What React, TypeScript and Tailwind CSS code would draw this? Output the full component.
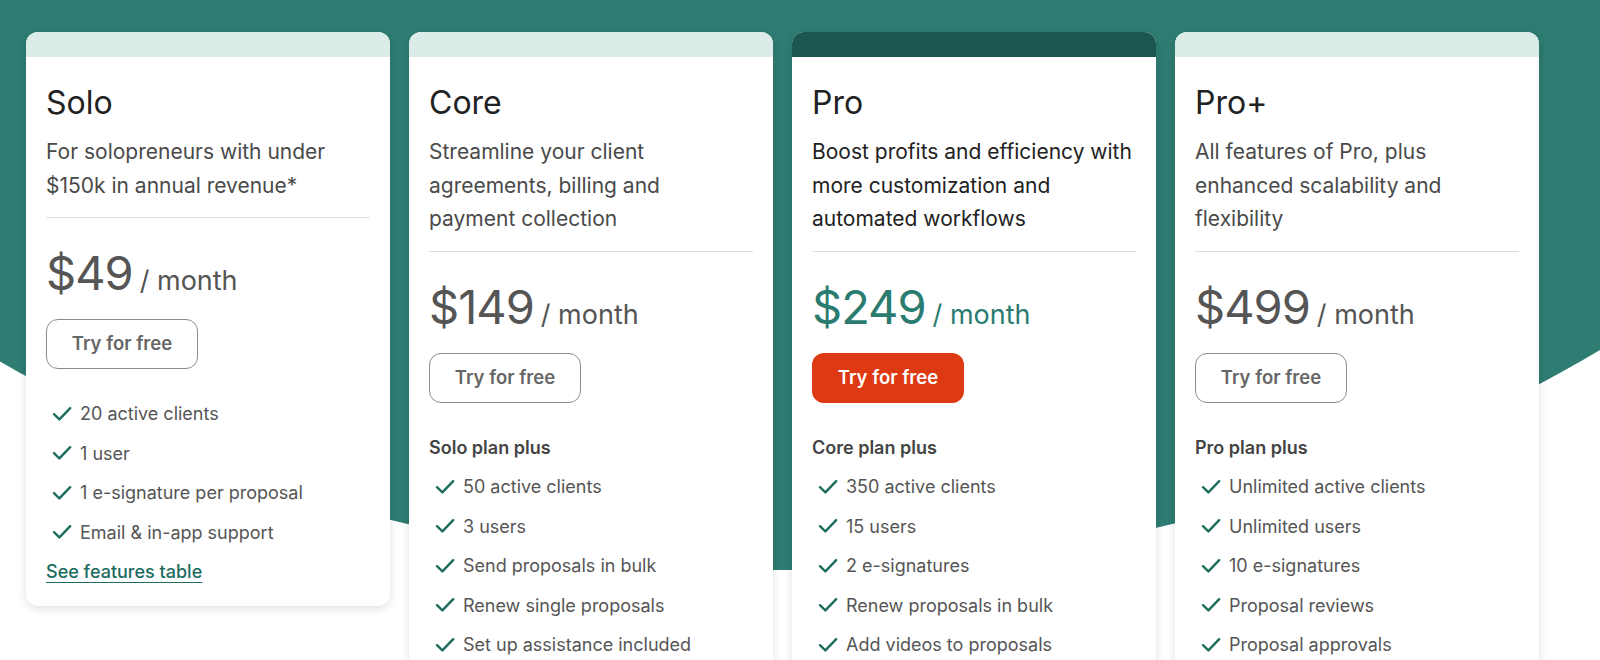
import React from "react";

type Plan = {
  name: string;
  desc: string[];
  price: string;
  featured?: boolean;
  heading?: string;
  features: string[];
  link?: string;
};

const plans: Plan[] = [
  {
    name: "Solo",
    desc: ["For solopreneurs with under", "$150k in annual revenue*"],
    price: "$49",
    features: ["20 active clients", "1 user", "1 e-signature per proposal", "Email & in-app support"],
    link: "See features table",
  },
  {
    name: "Core",
    desc: ["Streamline your client", "agreements, billing and", "payment collection"],
    price: "$149",
    heading: "Solo plan plus",
    features: [
      "50 active clients",
      "3 users",
      "Send proposals in bulk",
      "Renew single proposals",
      "Set up assistance included",
    ],
  },
  {
    name: "Pro",
    desc: ["Boost profits and efficiency with", "more customization and", "automated workflows"],
    price: "$249",
    featured: true,
    heading: "Core plan plus",
    features: [
      "350 active clients",
      "15 users",
      "2 e-signatures",
      "Renew proposals in bulk",
      "Add videos to proposals",
    ],
  },
  {
    name: "Pro+",
    desc: ["All features of Pro, plus", "enhanced scalability and", "flexibility"],
    price: "$499",
    heading: "Pro plan plus",
    features: [
      "Unlimited active clients",
      "Unlimited users",
      "10 e-signatures",
      "Proposal reviews",
      "Proposal approvals",
    ],
  },
];

function Check() {
  return (
    <svg width="20" height="16" viewBox="0 0 20 16" fill="none" className="shrink-0">
      <path d="M2 8.2 L7.4 13.4 L18.2 2.2" stroke="#1e6e60" strokeWidth="2.4" strokeLinecap="round" strokeLinejoin="round" />
    </svg>
  );
}

function PlanCard({ plan }: { plan: Plan }) {
  return (
    <div className="w-[364px] shrink-0 overflow-hidden rounded-xl bg-white shadow-[0_3px_10px_rgba(0,0,0,0.12)]">
      <div className={plan.featured ? "h-[25px] bg-[#1b5650]" : "h-[25px] bg-[#dbece8]"} />
      <div className="px-5 pb-[14px] pt-[26px]">
        <h2 className="text-[32px] leading-[40px] font-normal text-[#222]">{plan.name}</h2>
        <p className={`mt-[12px] text-[21px] leading-[33.5px] ${plan.featured ? "text-[#222]" : "text-[#4a4a4a]"}`}>
          {plan.desc.map((d, i) => (
            <span key={i} className="block whitespace-nowrap">
              {d}
            </span>
          ))}
        </p>
        <div className="mt-[15px] h-px bg-[#dedede]" />
        <div className={`mt-[27px] flex items-baseline gap-[7px] leading-[56px] ${plan.featured ? "text-[#2b7c70]" : "text-[#555]"}`}>
          <span className="text-[47px] tracking-[-1px]">{plan.price}</span>
          <span className="text-[27px]">/ month</span>
        </div>
        <button
          className={
            plan.featured
              ? "mt-[10px] h-[50px] w-[152px] rounded-xl bg-[#dd3912] text-[18.5px] font-semibold text-white"
              : "mt-[10px] h-[50px] w-[152px] rounded-xl border border-[#8c8c8c] text-[18.5px] font-semibold text-[#666]"
          }
        >
          Try for free
        </button>
        <div className="mt-[25px]">
          {plan.heading && (
            <div className="text-[18px] leading-[39.5px] font-semibold text-[#444]">{plan.heading}</div>
          )}
          {plan.features.map((f) => (
            <div key={f} className="flex items-center gap-[8px] pl-[6px] text-[18px] leading-[39.5px] text-[#555]">
              <Check />
              <span>{f}</span>
            </div>
          ))}
          {plan.link && (
            <a href="#" className="block text-[18px] leading-[39.5px] font-medium text-[#1d6b5f] underline underline-offset-4">
              {plan.link}
            </a>
          )}
        </div>
      </div>
    </div>
  );
}

export default function App() {
  return (
    <div className="relative h-[660px] w-[1600px] overflow-hidden bg-white font-['Inter',sans-serif]">
      {/* teal backdrop curve */}
      <div className="absolute left-[-710px] top-[-2210px] h-[2780px] w-[3000px] rounded-[50%] bg-[#2e7c72]" />
      <div className="relative flex items-start gap-[19px] pl-[26px] pt-[32px]">
        {plans.map((p) => (
          <PlanCard key={p.name} plan={p} />
        ))}
      </div>
    </div>
  );
}
